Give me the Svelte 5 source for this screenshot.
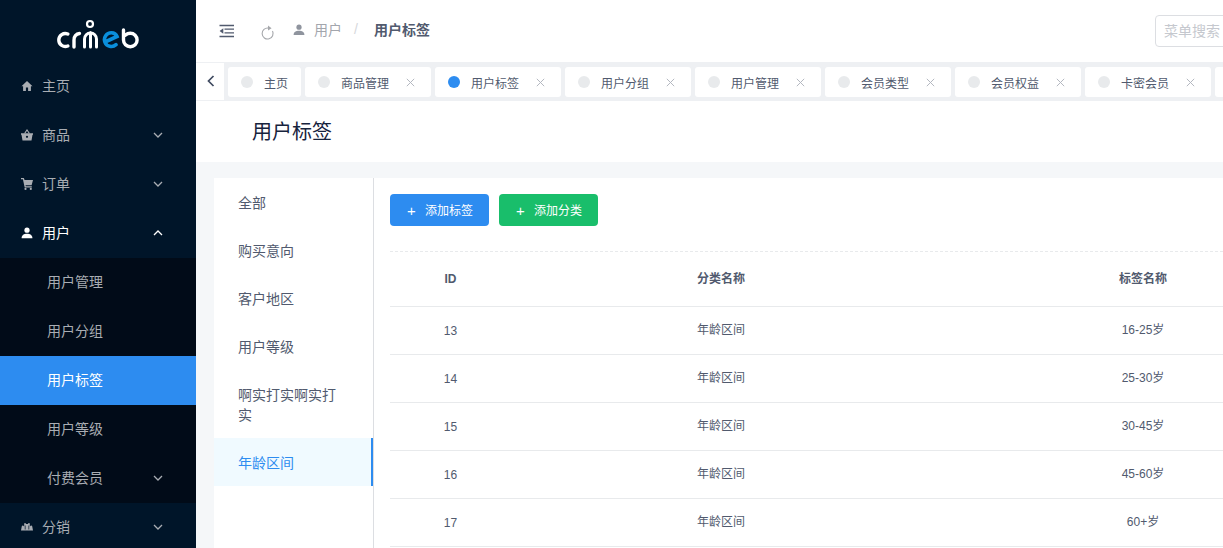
<script>
  const menu = [
    { label: '主页', icon: 'home' },
    { label: '商品', icon: 'basket', arrow: 'down' },
    { label: '订单', icon: 'cart', arrow: 'down' },
    { label: '用户', icon: 'user', arrow: 'up', open: true }
  ];
  const sub = [
    { label: '用户管理' },
    { label: '用户分组' },
    { label: '用户标签', active: true },
    { label: '用户等级' },
    { label: '付费会员', arrow: true }
  ];
  const tabs = ['商品管理', '用户标签', '用户分组', '用户管理', '会员类型', '会员权益', '卡密会员'];
  const cats = ['全部', '购买意向', '客户地区', '用户等级', '啊实打实啊实打实', '年龄区间'];
  const rows = [
    [13, '16-25岁'],
    [14, '25-30岁'],
    [15, '30-45岁'],
    [16, '45-60岁'],
    [17, '60+岁']
  ];
</script>

{#snippet chevron(dir)}
  <svg class="chev" viewBox="0 0 10 6" width="10" height="6" aria-hidden="true">
    <path d={dir === 'up' ? 'M1 5l4-4 4 4' : 'M1 1l4 4 4-4'} fill="none" stroke="currentColor" stroke-width="1.3" />
  </svg>
{/snippet}

{#snippet icon(name)}
  <svg class="ico" viewBox="0 0 12 12" width="12" height="12" aria-hidden="true">
    {#if name === 'home'}
      <path d="M6 1L.5 6.2h1.6V11h2.800V7.600h2.200V11h2.800V6.200h1.600z" fill="currentColor" />
    {:else if name === 'basket'}
      <path d="M3.600 4.500L6 1l2.400 3.500" fill="none" stroke="currentColor" stroke-width="1.100" />
      <path d="M0 4.200h12v1.500h-.5L10.500 11.500h-9L.5 5.700H0z" fill="currentColor" />
      <circle cx="6" cy="7.800" r="1.100" fill="#001529" />
    {:else if name === 'cart'}
      <path d="M0 0h2.800l.8 2H12l-1.400 5.200H4.500l.3 1.100h6v1.200H3.700L1.900 1.200H0z" fill="currentColor" />
      <circle cx="4.500" cy="10.900" r="1.100" fill="currentColor" />
      <circle cx="9.800" cy="10.900" r="1.100" fill="currentColor" />
    {:else if name === 'user'}
      <circle cx="6" cy="3.200" r="2.600" fill="currentColor" />
      <path d="M.6 11.200c0-3 2.400-4.400 5.400-4.400s5.400 1.400 5.400 4.400z" fill="currentColor" />
    {:else}
      <path d="M0 9.500l.8-4.300c.2-1 1.800-1 2 0h.4V3.200c0-1.400 1.600-1.400 1.800-.3h2c.2-1.100 1.800-1.100 1.800.3v2h.4c.2-1 1.800-1 2 0l.8 4.300z" fill="currentColor" />
      <path d="M4.200 4.500v4M7.800 4.500v4" stroke="#001529" stroke-width=".7" />
    {/if}
  </svg>
{/snippet}

<div class="page">
  <aside class="side">
    <div class="logo">
      <svg viewBox="0 0 82 30" width="82" height="30" role="img" aria-label="crmeb">
        <g fill="none" stroke="#fff" stroke-linecap="round">
          <path d="M10.800 15a6.500 6.500 0 1 0 0 12" stroke-width="3.400" />
          <path d="M17 28v-7a6 6 0 0 1 5.500-6.500" stroke-width="3.400" />
          <path d="M27.500 28v-8a6 6 0 0 1 12 0v8M33.500 13.500V28" stroke-width="3" />
          <circle cx="33" cy="5" r="3" stroke-width="2.200" />
          <path d="M66.500 11v10a6.800 6.800 0 1 0 6.800-6.800c-1.800 0-3.400.6-4.800 1.900" stroke-width="3.400" />
        </g>
        <path d="M48 23l12-5.500c-1-2.600-3.200-3.800-5.600-3.800a6.900 6.900 0 1 0 4.600 12" fill="none" stroke="#0a8fdc" stroke-width="3.600" stroke-linecap="round" />
      </svg>
    </div>
    <nav>
      {#each menu as m}
        <div class="item" class:open={m.open}>
          {@render icon(m.icon)}
          <span>{m.label}</span>
          {#if m.arrow}{@render chevron(m.arrow)}{/if}
        </div>
      {/each}
      <div class="sub">
        {#each sub as s}
          <div class="subitem" class:active={s.active}>
            <span>{s.label}</span>
            {#if s.arrow}{@render chevron('down')}{/if}
          </div>
        {/each}
      </div>
      <div class="item">
        {@render icon('group')}
        <span>分销</span>
        {@render chevron('down')}
      </div>
    </nav>
  </aside>

  <main class="main">
    <header class="top">
      <svg class="fold" viewBox="0 0 16 14" width="16" height="14" aria-hidden="true">
        <path d="M.5 1.500h14.500M5.500 5.200H15M5.500 8.800H15M.5 12.500h14.500" stroke="#515a6e" stroke-width="1.300" fill="none" />
        <path d="M4.300 4.300L.6 7l3.700 2.700z" fill="#515a6e" />
      </svg>
      <svg class="refresh" viewBox="0 0 14 16" width="14" height="16" aria-hidden="true">
        <path d="M7.500 3.100A5.500 5.500 0 1 0 11.500 6" fill="none" stroke="#a5a7ab" stroke-width="1.100" />
        <path d="M7 .5l3.600 2.700L7 5.500z" fill="#a5a7ab" />
      </svg>
      <svg class="crumb-ico" viewBox="0 0 12 12" width="12" height="12" aria-hidden="true">
        <circle cx="6" cy="3.200" r="2.600" fill="#8f949e" />
        <path d="M.6 11c0-3 2.400-4.200 5.400-4.200s5.400 1.200 5.400 4.200z" fill="#8f949e" />
      </svg>
      <span class="crumb">用户</span>
      <span class="slash">/</span>
      <strong class="crumb-now">用户标签</strong>
      <div class="search">菜单搜索</div>
    </header>

    <div class="tabs">
      <button class="back" aria-label="back">
        <svg viewBox="0 0 8 12" width="8" height="12" aria-hidden="true"><path d="M6.500 1L1.500 6l5 5" fill="none" stroke="#3f4a60" stroke-width="1.700" /></svg>
      </button>
      <div class="tab home-tab"><i class="dot"></i><span>主页</span></div>
      {#each tabs as t}
        <div class="tab" class:cur={t === '用户标签'}>
          <i class="dot"></i><span>{t}</span>
          <svg class="x" viewBox="0 0 9 9" width="9" height="9" aria-hidden="true"><path d="M.8.8l7.400 7.400M8.200.8L.8 8.200" stroke="#b4b8c0" stroke-width="1" fill="none" /></svg>
        </div>
      {/each}
      <div class="tab"></div>
    </div>

    <div class="title">用户标签</div>

    <section class="body">
      <div class="card">
        <ul class="cats">
          {#each cats as c}
            <li class:on={c === '年龄区间'} class:long={c.length > 6}>{c}</li>
          {/each}
        </ul>
        <div class="right">
          <div class="actions">
            <button class="btn blue"><b>+</b><span>添加标签</span></button>
            <button class="btn green"><b>+</b><span>添加分类</span></button>
          </div>
          <div class="table">
            <div class="tr th">
              <div class="c1">ID</div><div class="c2">分类名称</div><div class="c3">标签名称</div>
            </div>
            {#each rows as r}
              <div class="tr">
                <div class="c1">{r[0]}</div><div class="c2">年龄区间</div><div class="c3">{r[1]}</div>
              </div>
            {/each}
          </div>
        </div>
      </div>
    </section>
  </main>
</div>

<style>
  :global(body) {
    margin: 0;
    overflow: hidden;
    background: #fff;
  }
  .page {
    display: flex;
    width: 1223px;
    height: 548px;
    overflow: hidden;
    font-family: "Liberation Sans", "Noto Sans CJK SC", sans-serif;
    color: #515a6e;
  }
  .side {
    flex: 0 0 196px;
    width: 196px;
    background: #001529;
    color: #a9adb3;
  }
  .logo {
    height: 62px;
    display: flex;
    align-items: center;
    justify-content: center;
    padding-top: 6px;
    box-sizing: border-box;
  }
  .item {
    height: 49px;
    box-sizing: border-box;
    display: flex;
    align-items: center;
    padding: 0 33px 2px 21px;
    font-size: 14px;
  }
  .item span,
  .subitem span {
    margin-bottom: 2px;
  }
  .item .ico {
    margin-right: 9px;
  }
  .item.open {
    color: #fff;
  }
  .chev {
    margin-left: auto;
  }
  .sub {
    background: #010b18;
  }
  .subitem {
    height: 49px;
    box-sizing: border-box;
    display: flex;
    align-items: center;
    padding: 0 33px 2px 47px;
    font-size: 14px;
  }
  .subitem.active {
    background: #2d8cf0;
    color: #fff;
  }
  .main {
    flex: 0 0 1500px;
    width: 1500px;
    display: flex;
    flex-direction: column;
  }
  .top {
    height: 62px;
    flex: none;
    display: flex;
    align-items: center;
    background: #fff;
    font-size: 14px;
    padding-left: 23px;
  }
  .refresh {
    margin-left: 26px;
    margin-top: 4px;
  }
  .crumb-ico {
    margin-left: 18px;
    margin-right: 9px;
    margin-top: -2px;
  }
  .crumb {
    color: #a3a6ad;
    margin-top: -4px;
  }
  .slash {
    color: #d6d8dc;
    margin: -4px 16px 0 12px;
  }
  .crumb-now {
    color: #515a6e;
    font-weight: 700;
    margin-top: -4px;
  }
  .search {
    box-sizing: border-box;
    flex: none;
    margin-left: auto;
    margin-right: 341px;
    width: 200px;
    height: 32px;
    border: 1px solid #dcdee2;
    border-radius: 4px;
    padding-left: 8px;
    line-height: 30px;
    color: #c5c8ce;
    font-size: 14px;
  }
  .tabs {
    height: 39px;
    flex: none;
    box-sizing: border-box;
    display: flex;
    align-items: center;
    gap: 4px;
    background: #eef0f3;
    padding: 1px 8px 0 0;
  }
  .back {
    width: 28px;
    height: 38px;
    margin-top: -1px;
    flex: none;
    border: 0;
    background: #fff;
    display: flex;
    align-items: center;
    justify-content: center;
    padding: 0 0 1px 2px;
    border-bottom: 1px solid #eef0f3;
  }
  .tab {
    height: 30px;
    width: 126px;
    flex: none;
    box-sizing: border-box;
    display: flex;
    align-items: center;
    background: #fff;
    border-radius: 3px;
    padding-left: 13px;
    font-size: 12px;
    color: #515a6e;
  }
  .tab span {
    margin-top: 1px;
  }
  .home-tab {
    width: 73px;
  }
  .dot {
    width: 12px;
    height: 12px;
    border-radius: 50%;
    background: #e8eaec;
    margin-right: 11px;
    flex: none;
  }
  .cur .dot {
    background: #2d8cf0;
  }
  .x {
    margin-left: 17px;
  }
  .title {
    height: 61px;
    flex: none;
    box-sizing: border-box;
    background: #fff;
    padding-left: 56px;
    font-size: 20px;
    line-height: 62px;
    color: #17233d;
  }
  .body {
    flex: 1;
    background: #f5f7f9;
    padding: 16px 18px 0;
  }
  .card {
    display: flex;
    background: #fff;
    height: 400px;
  }
  .cats {
    list-style: none;
    margin: 0;
    padding: 1px 0 0;
    box-sizing: border-box;
    width: 160px;
    flex: none;
    border-right: 1px solid #dcdee2;
    font-size: 14px;
    line-height: 20px;
  }
  .cats li {
    box-sizing: border-box;
    width: 159px;
    padding: 14px 24px;
    color: #515a6e;
  }
  .cats li.long {
    padding-bottom: 13px;
  }
  .cats li.on {
    color: #2d8cf0;
    background: #f0faff;
    border-right: 2px solid #2d8cf0;
    padding: 15px 24px 13px;
  }
  .right {
    flex: 1;
    min-width: 0;
    padding: 16px 0 0 16px;
  }
  .actions {
    display: flex;
    gap: 10px;
    box-sizing: border-box;
    border-bottom: 1px dashed #e8eaec;
    height: 58px;
  }
  .btn {
    width: 99px;
    height: 32px;
    box-sizing: border-box;
    border: 0;
    border-radius: 4px;
    color: #fff;
    font-family: inherit;
    font-size: 12px;
    display: flex;
    align-items: center;
    justify-content: center;
    padding: 0 0 0 1px;
  }
  .btn span {
    margin-bottom: 2px;
  }
  .btn b {
    font-weight: 400;
    font-size: 15px;
    margin-right: 9px;
    line-height: 1;
  }
  .blue {
    background: #2d8cf0;
  }
  .green {
    background: #19be6b;
  }
  .table {
    width: 1386px;
  }
  .tr {
    display: grid;
    grid-template-columns: 120px 422px 422px 422px;
    height: 48px;
    padding-bottom: 4px;
    align-items: center;
    border-bottom: 1px solid #e8eaec;
    box-sizing: border-box;
    font-size: 12px;
    color: #515a6e;
    text-align: center;
  }
  .tr .c1 {
    margin-top: 4px;
    padding-left: 1px;
  }
  .th {
    height: 55px;
    padding-bottom: 3px;
    font-weight: 700;
  }
  .th .c1 {
    margin-top: 3px;
  }
</style>
